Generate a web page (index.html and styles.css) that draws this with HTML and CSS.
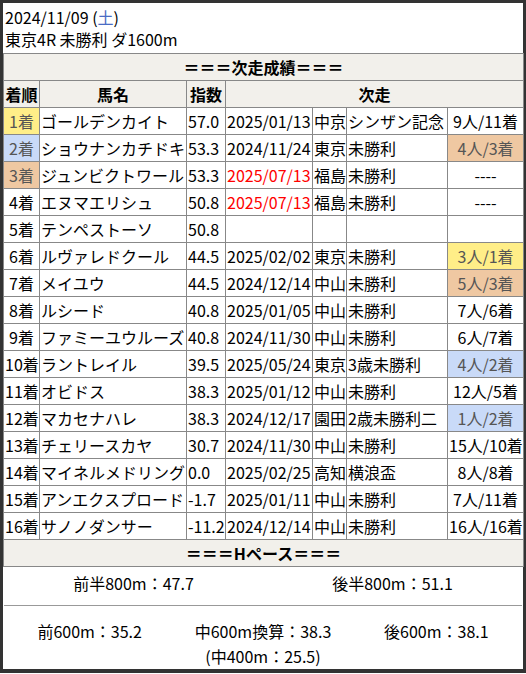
FILE: index.html
```html
<!DOCTYPE html>
<html lang="ja">
<head>
<meta charset="utf-8">
<title>次走成績</title>
<link rel="stylesheet" href="styles.css">
</head>
<body>
<div class="page">
  <div class="race-head">
    <div>2024/11/09 (<span class="sat">土</span>)</div>
    <div>東京4R 未勝利 ダ1600m</div>
  </div>
  <table class="results">
    <colgroup>
      <col class="c-rank"><col class="c-name"><col class="c-idx"><col class="c-date"><col class="c-venue"><col class="c-race"><col class="c-res">
    </colgroup>
    <tr class="section"><th colspan="7">＝＝＝次走成績＝＝＝</th></tr>
    <tr class="head"><th>着順</th><th>馬名</th><th>指数</th><th colspan="4">次走</th></tr>
    <tr><td class="rank p1">1着</td><td>ゴールデンカイト</td><td>57.0</td><td>2025/01/13</td><td>中京</td><td>シンザン記念</td><td class="res">9人/11着</td></tr>
    <tr><td class="rank p2">2着</td><td>ショウナンカチドキ</td><td>53.3</td><td>2024/11/24</td><td>東京</td><td>未勝利</td><td class="res p3">4人/3着</td></tr>
    <tr><td class="rank p3">3着</td><td>ジュンビクトワール</td><td>53.3</td><td class="future">2025/07/13</td><td>福島</td><td>未勝利</td><td class="res">----</td></tr>
    <tr><td class="rank">4着</td><td>エヌマエリシュ</td><td>50.8</td><td class="future">2025/07/13</td><td>福島</td><td>未勝利</td><td class="res">----</td></tr>
    <tr><td class="rank">5着</td><td>テンペストーソ</td><td>50.8</td><td></td><td></td><td></td><td class="res"></td></tr>
    <tr><td class="rank">6着</td><td>ルヴァレドクール</td><td>44.5</td><td>2025/02/02</td><td>東京</td><td>未勝利</td><td class="res p1">3人/1着</td></tr>
    <tr><td class="rank">7着</td><td>メイユウ</td><td>44.5</td><td>2024/12/14</td><td>中山</td><td>未勝利</td><td class="res p3">5人/3着</td></tr>
    <tr><td class="rank">8着</td><td>ルシード</td><td>40.8</td><td>2025/01/05</td><td>中山</td><td>未勝利</td><td class="res">7人/6着</td></tr>
    <tr><td class="rank">9着</td><td>ファミーユウルーズ</td><td>40.8</td><td>2024/11/30</td><td>中山</td><td>未勝利</td><td class="res">6人/7着</td></tr>
    <tr><td class="rank">10着</td><td>ラントレイル</td><td>39.5</td><td>2025/05/24</td><td>東京</td><td>3歳未勝利</td><td class="res p2">4人/2着</td></tr>
    <tr><td class="rank">11着</td><td>オビドス</td><td>38.3</td><td>2025/01/12</td><td>中山</td><td>未勝利</td><td class="res">12人/5着</td></tr>
    <tr><td class="rank">12着</td><td>マカセナハレ</td><td>38.3</td><td>2024/12/17</td><td>園田</td><td>2歳未勝利二</td><td class="res p2">1人/2着</td></tr>
    <tr><td class="rank">13着</td><td>チェリースカヤ</td><td>30.7</td><td>2024/11/30</td><td>中山</td><td>未勝利</td><td class="res">15人/10着</td></tr>
    <tr><td class="rank">14着</td><td>マイネルメドリング</td><td>0.0</td><td>2025/02/25</td><td>高知</td><td>横浪盃</td><td class="res">8人/8着</td></tr>
    <tr><td class="rank">15着</td><td>アンエクスプロード</td><td>-1.7</td><td>2025/01/11</td><td>中山</td><td>未勝利</td><td class="res">7人/11着</td></tr>
    <tr><td class="rank">16着</td><td>サノノダンサー</td><td>-11.2</td><td>2024/12/14</td><td>中山</td><td>未勝利</td><td class="res">16人/16着</td></tr>
    <tr class="section"><th colspan="7">＝＝＝Hペース＝＝＝</th></tr>
  </table>
  <div class="pace">
    <div class="pace-half">
      <div>前半800m：47.7</div>
      <div>後半800m：51.1</div>
    </div>
    <div class="pace-thirds">
      <div>前600m：35.2</div>
      <div>中600m換算：38.3<br>(中400m：25.5)</div>
      <div>後600m：38.1</div>
    </div>
  </div>
</div>
</body>
</html>
```
FILE: styles.css
```css
html, body {
  margin: 0;
  padding: 0;
  background: #fff;
}
body {
  font-family: "Noto Sans CJK JP", "Noto Sans", sans-serif;
  font-size: 16px;
  color: #000;
}
.page {
  width: 520px;
  border: 3px solid #333;
  border-bottom-width: 4px;
  background: #fff;
}
.race-head {
  height: 50px;
  padding: 0 2px;
  box-sizing: border-box;
  line-height: 22px;
  padding-top: 3px;
}
.sat {
  color: #4a6cc4;
}
.results {
  width: 520px;
  border-collapse: collapse;
  table-layout: fixed;
  border: 1px solid #888;
}
.c-rank { width: 36px; }
.c-name { width: 147px; }
.c-idx { width: 39px; }
.c-date { width: 87px; }
.c-venue { width: 34px; }
.c-race { width: 101px; }
.c-res { width: 76px; }
.results th,
.results td {
  border: 1px solid #888;
  height: 26px;
  padding: 0 1px;
  line-height: 26px;
  white-space: nowrap;
  overflow: visible;
  text-align: left;
  font-weight: normal;
}
.results th {
  background: #f2f0eb;
  font-weight: bold;
  text-align: center;
}
.results td.rank,
.results td.res {
  text-align: center;
}
.future {
  color: #ff0000;
}
.p1 { background: #ffee88; color: #555; }
.p2 { background: #c9daf8; color: #555; }
.p3 { background: #efc8a2; color: #555; }
.pace-half {
  display: grid;
  grid-template-columns: 1fr 1fr;
  text-align: center;
  height: 39px;
  box-sizing: border-box;
  padding-top: 5px;
  line-height: 23px;
  border-bottom: 1px solid #999;
  margin: 0 1px;
}
.pace-thirds {
  display: grid;
  grid-template-columns: 1fr 1fr 1fr;
  text-align: center;
  align-items: start;
  height: 63px;
  box-sizing: border-box;
  padding-top: 13px;
  line-height: 25px;
}
```
